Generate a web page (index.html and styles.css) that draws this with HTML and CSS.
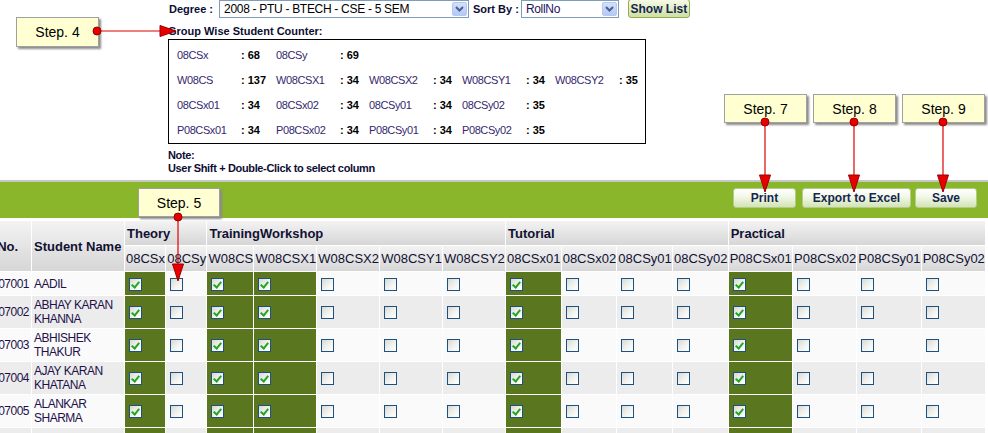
FILE: index.html
```html
<!DOCTYPE html>
<html>
<head>
<meta charset="utf-8">
<title>Student Group Selection</title>
<link rel="stylesheet" href="styles.css">
</head>
<body>
<div class="top">
  <div class="filters">
    <span class="lbl lbl-degree">Degree :</span>
    <div class="sel sel-degree">
      <span class="sel-text">2008 - PTU - BTECH - CSE - 5 SEM</span>
      <span class="sel-btn"><svg width="9" height="6" viewBox="0 0 9 6"><path d="M1 1 L4.5 4.5 L8 1" fill="none" stroke="#4d6185" stroke-width="2"/></svg></span>
    </div>
    <span class="lbl lbl-sort">Sort By :</span>
    <div class="sel sel-sort">
      <span class="sel-text sel-text-navy">RollNo</span>
      <span class="sel-btn"><svg width="9" height="6" viewBox="0 0 9 6"><path d="M1 1 L4.5 4.5 L8 1" fill="none" stroke="#4d6185" stroke-width="2"/></svg></span>
    </div>
    <button class="btn-show">Show List</button>
  </div>
  <div class="counter-title">Group Wise Student Counter:</div>
  <div class="counter">
    <span class="k">08CSx</span><span class="v">: 68</span><span class="k">08CSy</span><span class="v">: 69</span><span></span><span></span><span></span><span></span><span></span><span></span>
    <span class="k">W08CS</span><span class="v">: 137</span><span class="k">W08CSX1</span><span class="v">: 34</span><span class="k">W08CSX2</span><span class="v">: 34</span><span class="k">W08CSY1</span><span class="v">: 34</span><span class="k">W08CSY2</span><span class="v">: 35</span>
    <span class="k">08CSx01</span><span class="v">: 34</span><span class="k">08CSx02</span><span class="v">: 34</span><span class="k">08CSy01</span><span class="v">: 34</span><span class="k">08CSy02</span><span class="v">: 35</span><span></span><span></span>
    <span class="k">P08CSx01</span><span class="v">: 34</span><span class="k">P08CSx02</span><span class="v">: 34</span><span class="k">P08CSy01</span><span class="v">: 34</span><span class="k">P08CSy02</span><span class="v">: 35</span><span></span><span></span>
  </div>
  <div class="note">Note:<br>User Shift + Double-Click to select column</div>
</div>

<div class="toolbar">
  <button class="tbtn tb-print">Print</button>
  <button class="tbtn tb-excel">Export to Excel</button>
  <button class="tbtn tb-save">Save</button>
</div>

<div class="grid-wrap">
<table class="grid">
  <thead>
    <tr class="hr1">
      <th class="c-roll" rowspan="2">Roll No.</th>
      <th class="c-name" rowspan="2">Student Name</th>
      <th class="grp" colspan="2">Theory</th>
      <th class="grp" colspan="5">TrainingWorkshop</th>
      <th class="grp" colspan="4">Tutorial</th>
      <th class="grp" colspan="4">Practical</th>
    </tr>
    <tr class="hr2">
      <th class="sub">08CSx</th><th class="sub">08CSy</th>
      <th class="sub">W08CS</th><th class="sub">W08CSX1</th><th class="sub">W08CSX2</th><th class="sub">W08CSY1</th><th class="sub">W08CSY2</th>
      <th class="sub">08CSx01</th><th class="sub">08CSx02</th><th class="sub">08CSy01</th><th class="sub">08CSy02</th>
      <th class="sub">P08CSx01</th><th class="sub">P08CSx02</th><th class="sub">P08CSy01</th><th class="sub">P08CSy02</th>
    </tr>
  </thead>
  <tbody>
    <tr class="r1 odd">
      <td class="roll">0807001</td><td class="name">AADIL</td>
      <td class="ck sel-on"><span class="cb on"></span></td><td class="ck"><span class="cb"></span></td>
      <td class="ck sel-on"><span class="cb on"></span></td><td class="ck sel-on"><span class="cb on"></span></td><td class="ck"><span class="cb"></span></td><td class="ck"><span class="cb"></span></td><td class="ck"><span class="cb"></span></td>
      <td class="ck sel-on"><span class="cb on"></span></td><td class="ck"><span class="cb"></span></td><td class="ck"><span class="cb"></span></td><td class="ck"><span class="cb"></span></td>
      <td class="ck sel-on"><span class="cb on"></span></td><td class="ck"><span class="cb"></span></td><td class="ck"><span class="cb"></span></td><td class="ck"><span class="cb"></span></td>
    </tr>
    <tr class="even">
      <td class="roll">0807002</td><td class="name">ABHAY KARAN KHANNA</td>
      <td class="ck sel-on"><span class="cb on"></span></td><td class="ck"><span class="cb"></span></td>
      <td class="ck sel-on"><span class="cb on"></span></td><td class="ck sel-on"><span class="cb on"></span></td><td class="ck"><span class="cb"></span></td><td class="ck"><span class="cb"></span></td><td class="ck"><span class="cb"></span></td>
      <td class="ck sel-on"><span class="cb on"></span></td><td class="ck"><span class="cb"></span></td><td class="ck"><span class="cb"></span></td><td class="ck"><span class="cb"></span></td>
      <td class="ck sel-on"><span class="cb on"></span></td><td class="ck"><span class="cb"></span></td><td class="ck"><span class="cb"></span></td><td class="ck"><span class="cb"></span></td>
    </tr>
    <tr class="odd">
      <td class="roll">0807003</td><td class="name">ABHISHEK THAKUR</td>
      <td class="ck sel-on"><span class="cb on"></span></td><td class="ck"><span class="cb"></span></td>
      <td class="ck sel-on"><span class="cb on"></span></td><td class="ck sel-on"><span class="cb on"></span></td><td class="ck"><span class="cb"></span></td><td class="ck"><span class="cb"></span></td><td class="ck"><span class="cb"></span></td>
      <td class="ck sel-on"><span class="cb on"></span></td><td class="ck"><span class="cb"></span></td><td class="ck"><span class="cb"></span></td><td class="ck"><span class="cb"></span></td>
      <td class="ck sel-on"><span class="cb on"></span></td><td class="ck"><span class="cb"></span></td><td class="ck"><span class="cb"></span></td><td class="ck"><span class="cb"></span></td>
    </tr>
    <tr class="even">
      <td class="roll">0807004</td><td class="name">AJAY KARAN KHATANA</td>
      <td class="ck sel-on"><span class="cb on"></span></td><td class="ck"><span class="cb"></span></td>
      <td class="ck sel-on"><span class="cb on"></span></td><td class="ck sel-on"><span class="cb on"></span></td><td class="ck"><span class="cb"></span></td><td class="ck"><span class="cb"></span></td><td class="ck"><span class="cb"></span></td>
      <td class="ck sel-on"><span class="cb on"></span></td><td class="ck"><span class="cb"></span></td><td class="ck"><span class="cb"></span></td><td class="ck"><span class="cb"></span></td>
      <td class="ck sel-on"><span class="cb on"></span></td><td class="ck"><span class="cb"></span></td><td class="ck"><span class="cb"></span></td><td class="ck"><span class="cb"></span></td>
    </tr>
    <tr class="odd">
      <td class="roll">0807005</td><td class="name">ALANKAR SHARMA</td>
      <td class="ck sel-on"><span class="cb on"></span></td><td class="ck"><span class="cb"></span></td>
      <td class="ck sel-on"><span class="cb on"></span></td><td class="ck sel-on"><span class="cb on"></span></td><td class="ck"><span class="cb"></span></td><td class="ck"><span class="cb"></span></td><td class="ck"><span class="cb"></span></td>
      <td class="ck sel-on"><span class="cb on"></span></td><td class="ck"><span class="cb"></span></td><td class="ck"><span class="cb"></span></td><td class="ck"><span class="cb"></span></td>
      <td class="ck sel-on"><span class="cb on"></span></td><td class="ck"><span class="cb"></span></td><td class="ck"><span class="cb"></span></td><td class="ck"><span class="cb"></span></td>
    </tr>
    <tr class="even">
      <td class="roll"></td><td class="name"></td>
      <td class="ck sel-on"></td><td class="ck"></td>
      <td class="ck sel-on"></td><td class="ck sel-on"></td><td class="ck"></td><td class="ck"></td><td class="ck"></td>
      <td class="ck sel-on"></td><td class="ck"></td><td class="ck"></td><td class="ck"></td>
      <td class="ck sel-on"></td><td class="ck"></td><td class="ck"></td><td class="ck"></td>
    </tr>
  </tbody>
</table>
</div>

<div class="callouts">
  <div class="step step4">Step. 4</div>
  <div class="step step5">Step. 5</div>
  <div class="step step7">Step. 7</div>
  <div class="step step8">Step. 8</div>
  <div class="step step9">Step. 9</div>
  <svg class="arrows" width="988" height="433" viewBox="0 0 988 433">
    <g stroke="#e00000" stroke-width="1.2" fill="none">
      <line x1="97" y1="31" x2="162" y2="31"/>
      <line x1="178" y1="217" x2="178" y2="266"/>
      <line x1="765" y1="122" x2="765" y2="177"/>
      <line x1="854" y1="122" x2="854" y2="177"/>
      <line x1="943" y1="122" x2="943" y2="177"/>
    </g>
    <g fill="#e80000" stroke="#9a0000" stroke-width="1">
      <polygon points="160,25.5 176,31 160,36.5"/>
      <polygon points="172.5,264 183.5,264 178,281"/>
      <polygon points="759.5,175 770.5,175 765,192"/>
      <polygon points="848.5,175 859.5,175 854,192"/>
      <polygon points="937.5,175 948.5,175 943,192"/>
      <circle cx="97" cy="31" r="4"/>
      <circle cx="178" cy="217" r="4"/>
      <circle cx="765" cy="122" r="4"/>
      <circle cx="854" cy="122" r="4"/>
      <circle cx="943" cy="122" r="4"/>
    </g>
  </svg>
</div>
</body>
</html>
```

FILE: styles.css
```css
html, body {
  margin: 0;
  padding: 0;
}
body {
  width: 988px;
  height: 433px;
  overflow: hidden;
  position: relative;
  background: #ffffff;
  font-family: "Liberation Sans", Arial, sans-serif;
  color: #0d0d33;
}

/* ---------- top filter area ---------- */
.top {
  margin-left: 168px;
  height: 176px;
}
.filters {
  display: flex;
  align-items: center;
  height: 18px;
}
.lbl {
  font-size: 11px;
  font-weight: bold;
  color: #0d0d33;
  white-space: nowrap;
}
.lbl-degree { margin-left: 1px; margin-right: 6px; }
.lbl-sort { margin-left: 4px; margin-right: 2px; }
.sel {
  box-sizing: border-box;
  height: 18px;
  border: 1px solid #7f9db9;
  background: #ffffff;
  display: flex;
  align-items: center;
}
.sel-degree { width: 250px; }
.sel-sort { width: 98px; }
.sel-text {
  flex: 1;
  padding-left: 4px;
  font-size: 12px;
  letter-spacing: -0.3px;
  color: #000000;
  white-space: nowrap;
  overflow: hidden;
}
.sel-text-navy { color: #26135e; }
.sel-btn {
  box-sizing: border-box;
  width: 15px;
  height: 14px;
  margin-right: 1px;
  background: linear-gradient(#d3e0fd, #b4c8f6);
  border: 1px solid #b6c8f0;
  border-radius: 2px;
  display: flex;
  align-items: center;
  justify-content: center;
}
.btn-show {
  box-sizing: border-box;
  margin-left: 9px;
  width: 62px;
  height: 19px;
  margin-top: -1px;
  padding: 0;
  font-family: "Liberation Sans", Arial, sans-serif;
  font-size: 12px;
  font-weight: bold;
  color: #15264f;
  background: linear-gradient(#f6fae6, #cfe0a2);
  border: 1px solid #93ab52;
  border-radius: 3px;
}
.counter-title {
  margin-top: 7px;
  height: 14px;
  line-height: 13px;
  font-size: 11px;
  font-weight: bold;
  color: #0d0d33;
}
.counter {
  box-sizing: border-box;
  width: 478px;
  height: 105px;
  border: 1px solid #000000;
  padding: 2px 0 1px 8px;
  display: grid;
  grid-template-columns: 64px 35px 64px 29px 64px 29px 64px 29px 64px 25px;
  grid-auto-rows: 25px;
  align-items: center;
  font-size: 11px;
  overflow: hidden;
}
.counter .k {
  color: #33286e;
  letter-spacing: -0.4px;
  white-space: nowrap;
}
.counter .v {
  font-weight: bold;
  color: #000000;
  white-space: nowrap;
}
.note {
  margin-top: 5px;
  font-size: 11px;
  line-height: 13px;
  font-weight: bold;
  color: #0d0d33;
  letter-spacing: -0.35px;
}

/* ---------- green toolbar ---------- */
.toolbar {
  box-sizing: border-box;
  margin-top: 4px;
  height: 38px;
  border-top: 2px solid #c6c6c6;
  background: #8ab62c;
  display: flex;
  justify-content: flex-end;
  align-items: flex-start;
  padding: 6px 11px 0 0;
}
.tbtn {
  box-sizing: border-box;
  height: 20px;
  padding: 0;
  font-family: "Liberation Sans", Arial, sans-serif;
  font-size: 12px;
  font-weight: bold;
  color: #15264f;
  background: linear-gradient(#ffffff 0%, #f3f8ea 40%, #d2e4b4 100%);
  border: 1px solid #b3cb86;
  border-radius: 3px;
}
.tb-print { width: 63px; }
.tb-excel { width: 109px; margin-left: 6px; }
.tb-save { width: 62px; margin-left: 4px; }

/* ---------- data grid ---------- */
.grid-wrap {
  width: 1200px;
  margin-top: 3px;
  margin-left: -33px;
}
.grid {
  border-collapse: separate;
  border-spacing: 0;
  font-family: "Liberation Sans", Arial, sans-serif;
}
.grid th, .grid td {
  border-right: 1px solid #ffffff;
  border-bottom: 1px solid #ffffff;
}
.grid th {
  background: linear-gradient(#f3f3f3, #d6d6d6);
  color: #111133;
  text-align: left;
  font-size: 13px;
  white-space: nowrap;
  padding: 0 0.2px 0 1px;
}
.hr1 th { height: 24px; }
.hr2 th { height: 25px; }
.grp { font-weight: bold; }
.grid th.grp { padding-left: 2px; }
.sub { font-weight: normal; }
.grid th.c-roll {
  width: 61px;
  min-width: 61px;
  font-weight: bold;
  padding: 0 1px 0 2px;
}
.grid th.c-name {
  width: 89px;
  min-width: 89px;
  font-weight: bold;
  padding: 0 1px 0 2px;
}
.grid td {
  font-size: 12px;
  line-height: 14px;
  letter-spacing: -0.5px;
  color: #22104a;
  vertical-align: middle;
  padding: 2px 0 2px 1px;
}
.grid tr.odd td { background: #fafafa; }
.grid tr.even td { background: #ececec; }
.grid tr td { height: 28px; }
.grid tr.r1 td { height: 19px; }
.grid td.roll { text-align: right; padding-right: 2px; }
.grid td.name { padding-left: 2px; }
.grid td.ck { padding-left: 4px; }
.grid tr td.sel-on { background: #5a771f; }

.cb {
  display: inline-block;
  position: relative;
  box-sizing: border-box;
  width: 13px;
  height: 13px;
  border: 1px solid #1c5180;
  background: linear-gradient(135deg, #d9d9d3 0%, #f4f4f2 60%, #ffffff 100%);
  vertical-align: middle;
}
.cb.on::after {
  content: "";
  position: absolute;
  left: 3px;
  top: 1px;
  width: 3px;
  height: 6px;
  border: solid #22a622;
  border-width: 0 2px 2px 0;
  transform: rotate(40deg);
}

/* ---------- step callouts (overlay) ---------- */
.callouts {
  position: absolute;
  left: 0;
  top: 0;
  width: 988px;
  height: 433px;
  pointer-events: none;
}
.step {
  position: absolute;
  box-sizing: border-box;
  width: 83px;
  height: 29px;
  background: #ffffd2;
  border: 1px solid #a0a0a0;
  box-shadow: 2px 2px 2px #8c8c8c;
  font-family: "Liberation Sans", Arial, sans-serif;
  font-size: 14px;
  color: #000000;
  display: flex;
  align-items: center;
  justify-content: center;
}
.step4 { left: 16px; top: 17px; height: 30px; }
.step5 { left: 138px; top: 188px; width: 82px; }
.step7 { left: 724px; top: 94px; }
.step8 { left: 813px; top: 94px; }
.step9 { left: 902px; top: 94px; }
.arrows {
  position: absolute;
  left: 0;
  top: 0;
}
```
